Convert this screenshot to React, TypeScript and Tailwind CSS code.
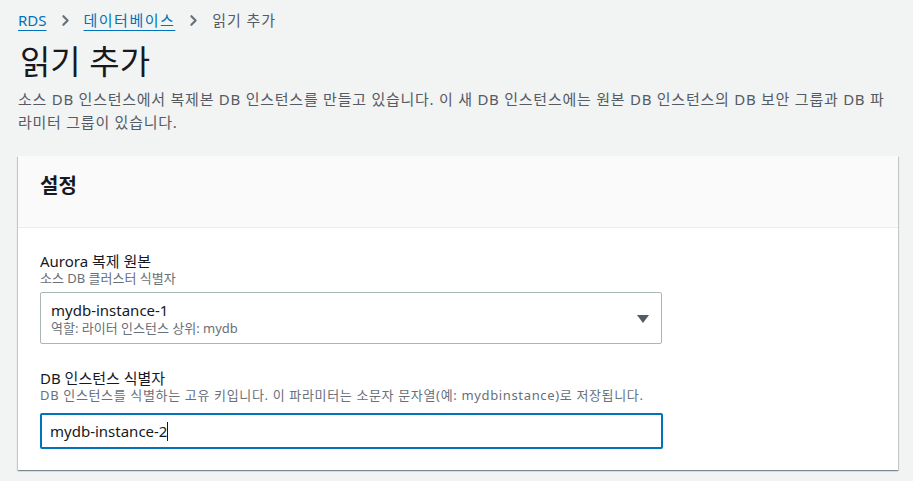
import { ChevronRight } from 'lucide-react';

const FONT = { fontFamily: '"Noto Sans", "Noto Sans CJK KR", sans-serif' };

export default function App() {
  return (
    <div className="min-h-[481px] bg-[#f2f3f3] px-[18px] pt-[10px] pb-4 text-[#16191f]" style={FONT}>
      <nav className="flex items-center gap-[10px] text-[15px] leading-[20px]">
        <a className="text-[#0073bb] underline underline-offset-[4px] decoration-[#0073bb]">RDS</a>
        <ChevronRight className="w-[17px] h-[17px] text-[#687078]" strokeWidth={3} />
        <a className="text-[#0073bb] underline underline-offset-[4px] decoration-[#0073bb] tracking-[0.1em]">데이터베이스</a>
        <ChevronRight className="w-[17px] h-[17px] text-[#687078]" strokeWidth={3} />
        <span className="text-[#545b64] tracking-[0.06em]">읽기 추가</span>
      </nav>

      <h1 className="mt-[12px] text-[33px] leading-[40px] font-normal text-[#16191f] pl-[2px]">읽기 추가</h1>

      <p className="mt-[6px] text-[15px] leading-[23px] text-[#545b64] tracking-[0.05em] mr-[-2px]">
        소스 DB 인스턴스에서 복제본 DB 인스턴스를 만들고 있습니다. 이 새 DB 인스턴스에는 원본 DB 인스턴스의 DB 보안 그룹과 DB 파라미터 그룹이 있습니다.
      </p>

      <section className="mt-[22px] mr-[-3px] bg-white shadow-[0_1px_1px_0_rgba(0,28,36,0.3),1px_1px_1px_0_rgba(0,28,36,0.15),-1px_1px_1px_0_rgba(0,28,36,0.15)]">
        <header className="h-[72px] bg-[#fafafa] border-b border-[#eaeded] px-[22px] flex items-center">
          <h2 className="text-[20px] font-bold leading-[24px] text-[#16191f] -mt-[12px]">설정</h2>
        </header>

        <div className="px-[22px] pt-[24px] pb-[21px] flex flex-col gap-[25px]">
          <div className="w-[622px]">
            <div className="text-[15px] leading-[18px] text-[#16191f]">Aurora 복제 원본</div>
            <div className="text-[13px] leading-[16px] text-[#687078]">소스 DB 클러스터 식별자</div>
            <div className="mt-[6px] h-[52px] border border-[#aab7b8] rounded-[2px] bg-white flex items-center justify-between pl-[10px] pr-[12px]">
              <div className="flex flex-col">
                <span className="text-[15px] leading-[20px] text-[#16191f]">mydb-instance-1</span>
                <span className="text-[13px] leading-[16px] text-[#687078]">역할: 라이터 인스턴스 상위: mydb</span>
              </div>
              <svg width="12" height="10" viewBox="0 0 12 10" className="mt-[2px]">
                <path d="M0 1h12L6 9z" fill="#545b64" />
              </svg>
            </div>
          </div>

          <div className="w-[623px]">
            <div className="text-[15px] leading-[18px] text-[#16191f]">DB 인스턴스 식별자</div>
            <div className="text-[13px] leading-[16px] text-[#687078] tracking-[0.05em]">
              DB 인스턴스를 식별하는 고유 키입니다. 이 파라미터는 소문자 문자열(예: mydbinstance)로 저장됩니다.
            </div>
            <div className="mt-[10px] h-[36px] border-2 border-[#0073bb] rounded-[2px] bg-white flex items-center pl-[8px]">
              <span className="text-[15px] leading-[20px] text-[#16191f]">mydb-instance-2</span>
              <span className="w-px h-[19px] bg-[#16191f]" />
            </div>
          </div>
        </div>
      </section>
    </div>
  );
}
